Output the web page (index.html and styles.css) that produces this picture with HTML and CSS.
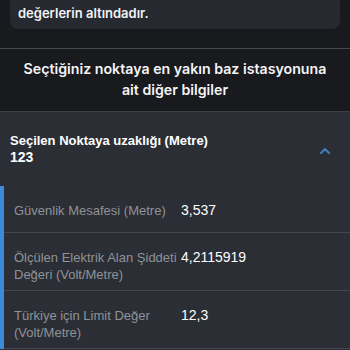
FILE: index.html
```html
<!DOCTYPE html>
<html lang="tr">
<head>
<meta charset="utf-8">
<link rel="stylesheet" href="styles.css">
</head>
<body>
<div class="card">
  <p class="card-text">değerlerin altındadır.</p>
</div>
<section class="heading">
  <h2>Seçtiğiniz noktaya en yakın baz istasyonuna<br>ait diğer bilgiler</h2>
</section>
<section class="detail">
  <div class="summary">
    <div class="summary-text">
      <div class="summary-title">Seçilen Noktaya uzaklığı (Metre)</div>
      <div class="summary-value">123</div>
    </div>
    <svg class="chevron" width="10" height="7" viewBox="0 0 10 7"><path d="M1 6 L5 2 L9 6" fill="none" stroke="#3f7fbf" stroke-width="2" stroke-linecap="round" stroke-linejoin="round"/></svg>
  </div>
  <div class="rows">
    <div class="row">
      <div class="label">Güvenlik Mesafesi (Metre)</div>
      <div class="value">3,537</div>
    </div>
    <div class="row">
      <div class="label">Ölçülen Elektrik Alan Şiddeti Değeri (Volt/Metre)</div>
      <div class="value">4,2115919</div>
    </div>
    <div class="row">
      <div class="label">Türkiye için Limit Değer (Volt/Metre)</div>
      <div class="value">12,3</div>
    </div>
  </div>
</section>
</body>
</html>
```
FILE: styles.css
```css
html, body {
  margin: 0;
  padding: 0;
  background: #191a1d;
  height: 350px;
  overflow: hidden;
}
body {
  font-family: "Liberation Sans", Arial, sans-serif;
  color: #ffffff;
}
.card {
  margin: 0 10px;
  background: #262930;
  border-radius: 0 0 8px 8px;
  padding: 4px 8px 7px;
}
.card-text {
  margin: 0;
  font-family: Inter, "Liberation Sans", sans-serif;
  font-weight: 600;
  font-size: 13px;
  line-height: 18px;
  color: #f2f2f4;
}
.heading {
  margin-top: 19px;
  border-top: 1px solid #48494c;
  padding: 9px 0 11px;
  text-align: center;
}
.heading h2 {
  margin: 0;
  font-family: Inter, "Liberation Sans", sans-serif;
  font-weight: 600;
  font-size: 14.2px;
  line-height: 21px;
  white-space: nowrap;
  color: #f4f4f6;
}
.detail {
  border-top: 1px solid #3b3e44;
  background: #2b2e34;
  height: 400px;
}
.summary {
  display: flex;
  align-items: center;
  justify-content: space-between;
  padding: 0 20px 0 10px;
  height: 74px;
}
.summary-text {
  font-weight: 700;
  font-size: 13px;
  line-height: 17px;
  color: #ffffff;
}
.summary-value {
  font-size: 14px;
}
.chevron {
  display: block;
  margin-top: 2px;
}
.rows {
  border-left: 4px solid #3b8bd8;
}
.row {
  display: flex;
  align-items: flex-start;
  padding: 16px 0 7px 10px;
  min-height: 47px;
  box-sizing: border-box;
  border-bottom: 1px solid #44474d;
}
.label {
  width: 167px;
  font-size: 13px;
  line-height: 17px;
  color: #8f9298;
}
.value {
  font-size: 14px;
  line-height: 17px;
  color: #ffffff;
}
```
